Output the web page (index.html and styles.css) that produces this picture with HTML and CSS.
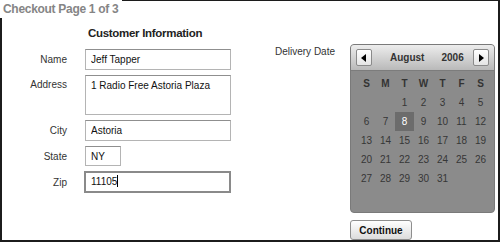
FILE: index.html
```html
<!DOCTYPE html>
<html>
<head>
	<title>Checkout</title>
	<meta charset="UTF-8">
	<link rel="stylesheet" href="styles.css">
</head>
<body>
	<div id="frame">
		<div id="page-title">Checkout Page 1 of 3</div>
		<div id="content">
			<div id="customer">
				<h2>Customer Information</h2>
				<div class="row">
					<label>Name</label>
					<input type="text" class="field" value="Jeff Tapper">
				</div>
				<div class="row">
					<label>Address</label>
					<textarea class="field area">1 Radio Free Astoria Plaza</textarea>
				</div>
				<div class="row">
					<label>City</label>
					<input type="text" class="field" value="Astoria">
				</div>
				<div class="row">
					<label>State</label>
					<input type="text" class="field state" value="NY">
				</div>
				<div class="row">
					<label>Zip</label>
					<div class="field zip">11105<span class="caret"></span></div>
				</div>
			</div>
			<div id="delivery">
				<label>Delivery Date</label>
				<div id="cal-col">
					<div id="calendar">
						<div id="cal-head">
							<span class="arrow"><svg width="6" height="8" viewBox="0 0 6 8"><polygon points="5,0 5,8 0,4" fill="#000"/></svg></span>
							<span class="month">August</span>
							<span class="year">2006</span>
							<span class="arrow"><svg width="6" height="8" viewBox="0 0 6 8"><polygon points="1,0 1,8 6,4" fill="#000"/></svg></span>
						</div>
						<div id="days">
							<span class="dn">S</span><span class="dn">M</span><span class="dn">T</span><span class="dn">W</span><span class="dn">T</span><span class="dn">F</span><span class="dn">S</span>
							<span></span><span></span><span>1</span><span>2</span><span>3</span><span>4</span><span>5</span>
							<span>6</span><span>7</span><span class="selected">8</span><span>9</span><span>10</span><span>11</span><span>12</span>
							<span>13</span><span>14</span><span>15</span><span>16</span><span>17</span><span>18</span><span>19</span>
							<span>20</span><span>21</span><span>22</span><span>23</span><span>24</span><span>25</span><span>26</span>
							<span>27</span><span>28</span><span>29</span><span>30</span><span>31</span>
						</div>
					</div>
					<button id="continue">Continue</button>
				</div>
			</div>
		</div>
	</div>
</body>
</html>
```

FILE: styles.css
```css
*{
	margin: 0;
	padding: 0;
	box-sizing: border-box;
}
body{
	font-family: "Liberation Sans", Arial, sans-serif;
	background: #fff;
}
#frame{
	position: relative;
	width: 500px;
	height: 242px;
	border: 2px solid #1c1c1c;
	border-top-width: 1px;
}
#page-title{
	position: absolute;
	left: -2px;
	top: -1px;
	height: 18px;
	padding: 2px 4px 0 3px;
	background: #fff;
	color: #858585;
	font-size: 12px;
	font-weight: bold;
	letter-spacing: -0.3px;
}
#content{
	display: flex;
	padding-top: 26px;
}
#customer{
	width: 229px;
}
#customer h2{
	font-size: 11.5px;
	color: #222;
	margin-left: 86px;
	height: 22px;
	letter-spacing: -0.3px;
}
.row{
	display: flex;
	align-items: center;
	gap: 18px;
	margin-bottom: 5px;
}
.row label{
	width: 65px;
	text-align: right;
	font-size: 10px;
	color: #333;
}
.row:nth-child(3){
	align-items: flex-start;
}
.row:nth-child(3) label{
	padding-top: 4px;
}
.field{
	width: 146px;
	height: 21px;
	border: 1px solid #b4b4b4;
	border-top-color: #8f8f8f;
	font-family: "Liberation Sans", Arial, sans-serif;
	font-size: 10px;
	color: #111;
	padding: 0 5px;
	outline: none;
	background: #fff;
}
.area{
	height: 40px;
	padding: 4px 5px;
	resize: none;
	overflow: hidden;
}
.state{
	width: 36px;
	height: 20px;
}
.zip{
	width: 147px;
	height: 22px;
	margin-left: -1px;
	border: 2px solid #8a8a8a;
	line-height: 18px;
	padding: 0 5px;
}
.caret{
	display: inline-block;
	width: 1px;
	height: 12px;
	background: #000;
	vertical-align: -2px;
}
#delivery{
	display: flex;
	margin-left: 44px;
	gap: 18px;
	padding-top: 17px;
}
#delivery label{
	font-size: 10px;
	color: #333;
	width: 57px;
	padding-top: 2px;
	white-space: nowrap;
}
#cal-col{
	display: flex;
	flex-direction: column;
	align-items: flex-start;
	gap: 7px;
}
#calendar{
	width: 145px;
	height: 169px;
	border-radius: 4px;
	background: #8b8b8b;
	border: 1px solid #7a7a7a;
	overflow: hidden;
}
#cal-head{
	display: flex;
	align-items: center;
	height: 26px;
	padding: 0 5px;
	background: linear-gradient(#ededed, #b9b9b9);
	border-bottom: 1px solid #7c7c7c;
	font-size: 10px;
	font-weight: bold;
	color: #333;
}
.arrow{
	display: flex;
	align-items: center;
	justify-content: center;
	flex-shrink: 0;
	width: 16px;
	height: 17px;
	background: linear-gradient(#ffffff, #e4e4e4);
	border: 1px solid #8a8a8a;
	border-radius: 2px;
}
.month{
	margin-left: 18px;
}
.year{
	margin-left: 17px;
	margin-right: auto;
}
#days{
	display: grid;
	grid-template-columns: repeat(7, 19px);
	grid-auto-rows: 19px;
	padding: 3px 0 0 6px;
	font-size: 10px;
	color: #363636;
}
#days span{
	display: flex;
	align-items: center;
	justify-content: center;
}
#days .dn{
	font-weight: bold;
	color: #333;
}
#days .selected{
	background: #6c6c6c;
	color: #fff;
}
#continue{
	width: 62px;
	height: 20px;
	border: 1px solid #8e8e8e;
	border-radius: 3px;
	background: linear-gradient(#ffffff, #dcdcdc);
	font-family: "Liberation Sans", Arial, sans-serif;
	font-size: 10px;
	font-weight: bold;
	color: #111;
}
```
